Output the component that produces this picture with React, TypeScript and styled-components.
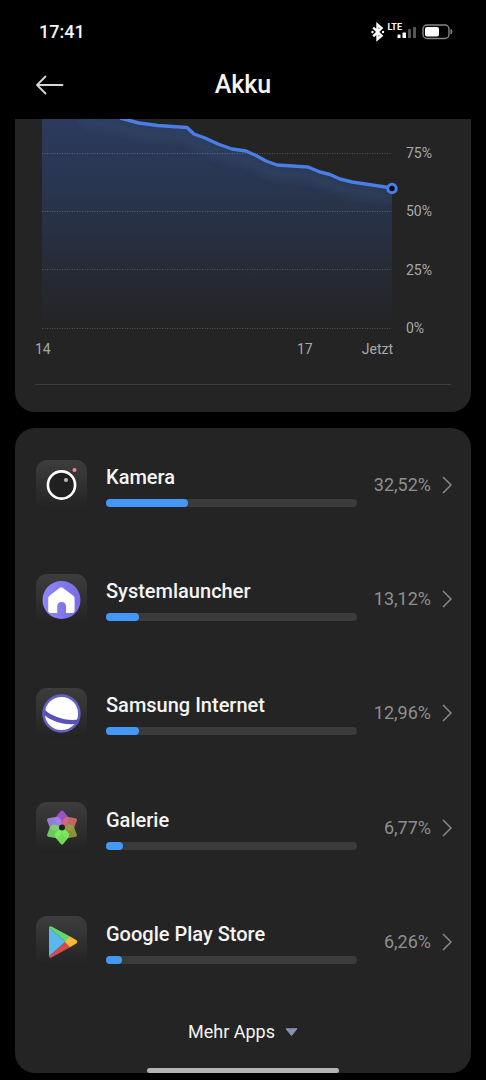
import React from "react";
import styled, { createGlobalStyle } from "styled-components";

const GlobalStyle = createGlobalStyle`
  *, *::before, *::after { box-sizing: border-box; }
  body {
    margin: 0;
    background: #000;
    color: #f4f4f4;
    font-family: Roboto, "Liberation Sans", sans-serif;
  }
  button { font: inherit; color: inherit; background: none; border: 0; padding: 0; cursor: pointer; }
`;

const Screen = styled.div`
  padding: 0 15px 7px;
`;

const StatusBar = styled.div`
  display: flex;
  align-items: center;
  justify-content: space-between;
  height: 52px;
  padding: 12px 17px 0 24px;
`;

const Clock = styled.time`
  font-size: 18px;
  line-height: 24px;
  font-weight: 500;
`;

const StatusIcons = styled.svg`
  width: 84px;
  height: 24px;
`;

const Header = styled.header`
  display: grid;
  grid-template-columns: 40px 1fr 40px;
  align-items: center;
  height: 67px;
  padding: 0 15px 2px;
`;

const BackButton = styled.button`
  display: flex;
  align-items: center;
  height: 40px;
  padding-left: 5px;
`;

const Title = styled.h1`
  margin: 0;
  text-align: center;
  font-size: 25px;
  line-height: 32px;
  font-weight: 500;
`;

const Card = styled.section`
  background: #242424;
  border-radius: 20px;
`;

const ChartCard = styled(Card)`
  border-radius: 0 0 20px 20px;
  padding: 0 20px 27px;
  margin-bottom: 16px;
`;

const AppsCard = styled(Card)`
  padding-bottom: 8px;
`;

const ChartArea = styled.div`
  display: grid;
  grid-template-columns: 1fr 45px;
  column-gap: 14px;
  padding-left: 7px;
`;

const Plot = styled.svg`
  width: 100%;
  height: 100%;
  overflow: visible;
`;

const AxisLabel = styled.span`
  font-size: 14px;
  line-height: 18px;
  color: #a9a9a9;
`;

const LevelAxis = styled.div`
  display: flex;
  flex-direction: column;
  justify-content: space-between;
  height: 218px;
  padding-top: 25px;
`;

const TimeAxis = styled.div`
  display: flex;
  gap: 49px;
  margin: 3px 58px 0 0;

  ${AxisLabel}:first-child { margin-right: auto; }
`;

const Divider = styled.hr`
  height: 1px;
  margin: 26px 0 0;
  border: 0;
  background: #3c3c3c;
`;

const AppList = styled.ul`
  display: grid;
  grid-auto-rows: 1fr;
  min-height: 571px;
  margin: 0;
  padding: 0;
  list-style: none;
`;

const AppRow = styled.button`
  display: grid;
  grid-template-columns: 51px 1fr 77px;
  align-items: center;
  width: 100%;
  height: 100%;
  padding: 0 19px 0 21px;
  text-align: left;
`;

const AppTile = styled.svg`
  width: 51px;
  height: 51px;
`;

const Usage = styled.div`
  display: grid;
  row-gap: 10px;
  margin: 0 18px 0 19px;
  padding-top: 2px;
`;

const AppName = styled.span`
  font-size: 20px;
  line-height: 24px;
  font-weight: 500;
`;

const Track = styled.div`
  height: 8px;
  border-radius: 4px;
  background: #3b3b3b;
`;

const Fill = styled.div`
  height: 100%;
  border-radius: 4px;
  background: #4499f8;
`;

const RowEnd = styled.span`
  display: flex;
  align-items: center;
  justify-content: flex-end;
  gap: 11px;
`;

const Share = styled.span`
  font-size: 18px;
  line-height: 24px;
  color: #8f8f8f;
`;

const Chevron = styled.svg`
  width: 10px;
  height: 18px;
  flex: none;
`;

const MoreButton = styled.button`
  display: flex;
  align-items: center;
  justify-content: center;
  gap: 10px;
  width: 100%;
  height: 66px;
  font-size: 18px;
  line-height: 24px;
`;

const HomeIndicator = styled.div`
  position: fixed;
  bottom: 7px;
  left: 50%;
  width: 192px;
  height: 5px;
  margin-left: -96px;
  border-radius: 3px;
  background: #b4b4b4;
`;

const PETALS = [
  { angle: 0, color: "#b052e0" },
  { angle: 60, color: "#d2706a" },
  { angle: 300, color: "#a08ae6" },
  { angle: 120, color: "#96a03e" },
  { angle: 240, color: "#78dc66" },
  { angle: 180, color: "#7af25a" },
];

const cameraArt = (
  <>
    <circle cx="25.5" cy="25" r="13.6" fill="#202020" stroke="#fff" strokeWidth="2.6" />
    <circle cx="30" cy="20" r="2.1" fill="#b9b9b9" />
    <circle cx="38.5" cy="10" r="2.1" fill="#e58a8a" />
  </>
);

const launcherArt = (
  <>
    <circle cx="25.5" cy="26" r="19" fill="url(#violet)" />
    <path
      d="M23.8 13.8Q25.2 12.6 26.6 13.8L37 21.4Q38.6 22.6 38.6 24.4V36.5Q38.6 39 36 39H30V32.5Q30 28 25.6 28Q21.2 28 21.2 32.500V39H14.800Q12.200 39 12.200 36.500V24.400Q12.200 22.600 13.800 21.400Z"
      fill="#fff"
    />
  </>
);

const internetArt = (
  <>
    <circle cx="25.5" cy="25.5" r="17.9" fill="#fff" stroke="#6660c4" strokeWidth="2.6" />
    <path
      d="M8 21C11 24 14.500 26.500 21 29C29 32 37 32.800 44 31L42.500 35.400C35.500 36.800 27 36.300 19 33.300C13.500 31 9.500 28.500 7.200 26Z"
      fill="#5952bb"
    />
  </>
);

const galleryArt = (
  <>
    {PETALS.map(({ angle, color }) => (
      <path
        key={angle}
        transform={`rotate(${angle} 26 25.5)`}
        d="M24.8 9Q26 7.8 27.2 9L31.8 14.5Q34.6 18.5 31 22L26 25.5L21 22Q17.4 18.5 20.2 14.5Z"
        fill={color}
        fillOpacity="0.88"
      />
    ))}
    <circle cx="26" cy="25.5" r="3" fill="#202020" />
  </>
);

const playArt = (
  <>
    <path d="M13 11.5V40.5L29.5 25.8Z" fill="#58b9ec" />
    <path d="M13 11.5Q13.4 9.6 15.5 10.4L34.5 20.8L29.5 25.8Z" fill="#62d873" />
    <path d="M13 40.5Q13.4 42.6 15.5 41.6L34.5 31L29.5 25.8Z" fill="#d94a4c" />
    <path d="M34 20.5L40.6 24.3Q42 25.7 40.6 27.2L34 31.2L28.8 25.8Z" fill="#f5bb36" />
  </>
);

const APPS = [
  { name: "Kamera", share: 32.52, art: cameraArt },
  { name: "Systemlauncher", share: 13.12, art: launcherArt },
  { name: "Samsung Internet", share: 12.96, art: internetArt },
  { name: "Galerie", share: 6.77, art: galleryArt },
  { name: "Google Play Store", share: 6.26, art: playArt },
];

const LEVELS = ["75%", "50%", "25%", "0%"];
const GRID_LINES = [34.5, 92.5, 150.5, 209.5];
const CURVE =
  "L97 4L116 6.5L145 8.5L152 15L163 19L176 25L190 30L204 32L214 36.5L224 42L235 46L266 48L278 53L288 55.5L298 60L310 63L330 66L350 69";

function PhoneStatus() {
  return (
    <StatusIcons viewBox="0 0 84 24" role="img" aria-label="Bluetooth, LTE, Akku">
      <path d="M3.200 7.500L11.500 15.800L7.500 19.200V4.600L11.500 8L3.200 16.300" fill="none" stroke="#fff" strokeWidth="2.400" />
      <circle cx="2.500" cy="12" r="1.200" fill="#fff" />
      <circle cx="13" cy="12" r="1.200" fill="#fff" />
      <text x="17.500" y="10" fill="#fff" fontSize="9" fontWeight="700">LTE</text>
      <rect x="27.500" y="14.500" width="3" height="3.500" rx="0.500" fill="#fff" />
      <rect x="32.500" y="12.500" width="3.500" height="5.500" rx="0.500" fill="#fff" />
      <rect x="38" y="9" width="3" height="9" rx="0.500" fill="#555" />
      <rect x="43" y="7" width="3" height="11" rx="0.500" fill="#555" />
      <rect x="53" y="5" width="26" height="13.500" rx="4" fill="none" stroke="#858585" strokeWidth="1.400" />
      <rect x="55" y="7" width="14" height="9.500" rx="2" fill="#fff" />
      <path d="M81 9.500Q83 11.700 81 14Z" fill="#858585" stroke="#858585" />
    </StatusIcons>
  );
}

function BatteryChart() {
  return (
    <ChartArea>
      <Plot viewBox="0 0 350 218" preserveAspectRatio="none" role="img" aria-label="Akkuverlauf">
        <defs>
          <linearGradient id="level" x1="0" y1="0" x2="0" y2="209" gradientUnits="userSpaceOnUse">
            <stop offset="0" stopColor="#2b3b5e" />
            <stop offset="0.35" stopColor="#29354e" />
            <stop offset="0.7" stopColor="#262b37" />
            <stop offset="1" stopColor="#242424" />
          </linearGradient>
          <clipPath id="under">
            <path d={`M0 0H82${CURVE}V209H0Z`} />
          </clipPath>
          <filter id="glow" x="-10%" y="-50%" width="120%" height="200%">
            <feGaussianBlur stdDeviation="4" />
          </filter>
        </defs>
        <path d={`M0 0H82${CURVE}V209H0Z`} fill="url(#level)" />
        <g clipPath="url(#under)">
          <path
            d={`M40 -8L82 0${CURVE}`}
            transform="translate(0 9)"
            fill="none"
            stroke="#2f4c6c"
            strokeOpacity="0.5"
            strokeWidth="9"
            filter="url(#glow)"
          />
        </g>
        {GRID_LINES.map((y) => (
          <path key={y} d={`M0 ${y}H350`} stroke="#fff" strokeOpacity="0.22" strokeDasharray="1 1.5" />
        ))}
        <path d={`M78 -1L82 0${CURVE}`} fill="none" stroke="#4a7de6" strokeWidth="3.4" strokeLinejoin="round" clipPath="url(#top)" />
        <clipPath id="top">
          <rect x="0" y="0" width="360" height="218" />
        </clipPath>
        <circle cx="350" cy="69.5" r="4.2" fill="#0a0a12" stroke="#4a7de6" strokeWidth="3" />
      </Plot>
      <LevelAxis>
        {LEVELS.map((level) => (
          <AxisLabel key={level}>{level}</AxisLabel>
        ))}
      </LevelAxis>
    </ChartArea>
  );
}

export default function App() {
  return (
    <>
      <GlobalStyle />
      <Screen>
        <StatusBar>
          <Clock>17:41</Clock>
          <PhoneStatus />
        </StatusBar>
        <Header>
          <BackButton type="button" aria-label="Zurück">
            <svg width="30" height="20" viewBox="0 0 30 20" fill="none" stroke="#d6d6d6" strokeWidth="1.8" strokeLinecap="round" strokeLinejoin="round">
              <path d="M27.500 10H2M10.500 1.500L2 10L10.500 18.500" />
            </svg>
          </BackButton>
          <Title>Akku</Title>
        </Header>
        <main>
          <ChartCard>
            <BatteryChart />
            <TimeAxis>
              <AxisLabel>14</AxisLabel>
              <AxisLabel>17</AxisLabel>
              <AxisLabel>Jetzt</AxisLabel>
            </TimeAxis>
            <Divider />
          </ChartCard>
          <AppsCard>
            <AppList>
              {APPS.map(({ name, share, art }) => (
                <li key={name}>
                  <AppRow type="button">
                    <AppTile viewBox="0 0 51 51" aria-hidden="true">
                      <defs>
                        <linearGradient id="tile" x1="0" y1="0" x2="0" y2="1">
                          <stop offset="0" stopColor="#3d3d3d" />
                          <stop offset="1" stopColor="#222222" />
                        </linearGradient>
                        <linearGradient id="violet" x1="0" y1="0" x2="1" y2="0">
                          <stop offset="0" stopColor="#9087f6" />
                          <stop offset="1" stopColor="#766be4" />
                        </linearGradient>
                      </defs>
                      <rect width="51" height="51" rx="11" fill="url(#tile)" />
                      {art}
                    </AppTile>
                    <Usage>
                      <AppName>{name}</AppName>
                      <Track>
                        <Fill style={{ width: `${share}%` }} />
                      </Track>
                    </Usage>
                    <RowEnd>
                      <Share>{share.toFixed(2).replace(".", ",")}%</Share>
                      <Chevron viewBox="0 0 10 18" fill="none" stroke="#8a8a8a" strokeWidth="1.5" aria-hidden="true">
                        <path d="M1 1L9 9L1 17" />
                      </Chevron>
                    </RowEnd>
                  </AppRow>
                </li>
              ))}
            </AppList>
            <MoreButton type="button">
              Mehr Apps
              <svg width="13" height="9" viewBox="0 0 13 9" aria-hidden="true">
                <path d="M1 0.8H12L6.5 7.5Z" fill="#8a90b0" stroke="#8a90b0" strokeLinejoin="round" />
              </svg>
            </MoreButton>
          </AppsCard>
        </main>
      </Screen>
      <HomeIndicator />
    </>
  );
}
